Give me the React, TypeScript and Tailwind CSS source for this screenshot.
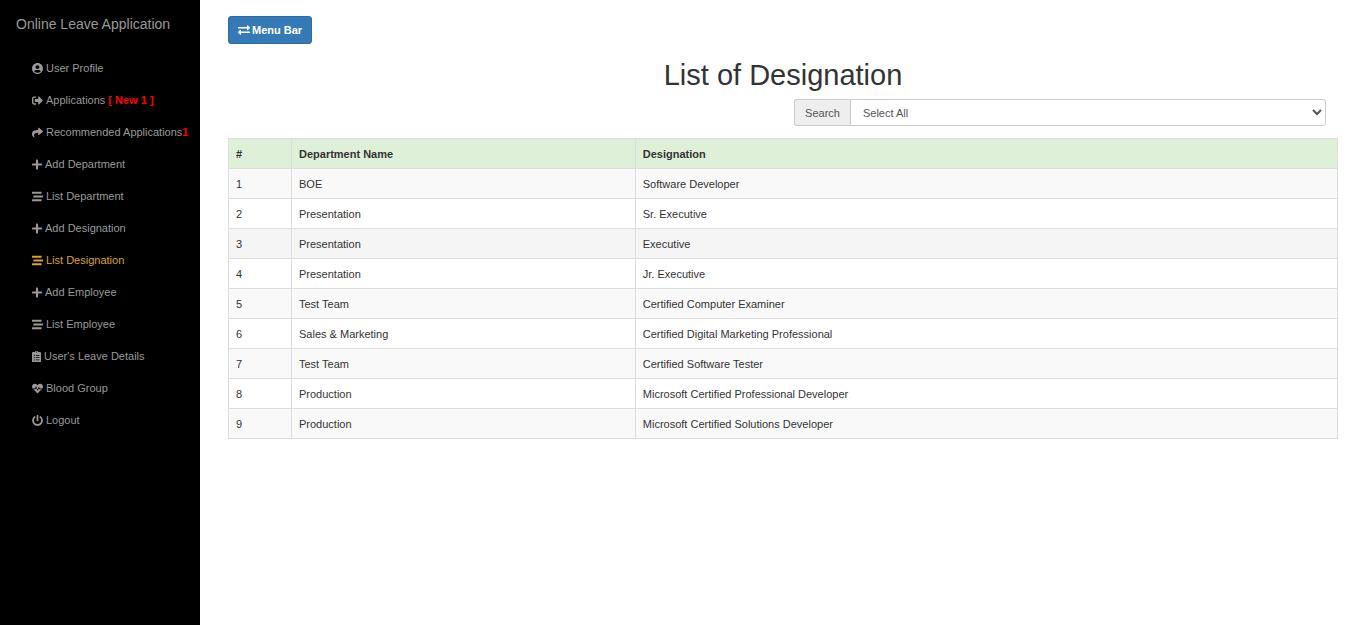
import { useState } from "react";
import type { IconType } from "react-icons";
import {
  FaClipboardList,
  FaExchangeAlt,
  FaHeartbeat,
  FaPlus,
  FaPowerOff,
  FaShare,
  FaSignOutAlt,
  FaStream,
  FaUserCircle,
} from "react-icons/fa";

type NavItem = {
  label: string;
  icon: IconType;
  iconWidth?: string;
  note?: string;
  spaced?: boolean;
};

const navItems: NavItem[] = [
  { label: "User Profile", icon: FaUserCircle },
  { label: "Applications", icon: FaSignOutAlt, note: "[ New 1 ]", spaced: true },
  { label: "Recommended Applications", icon: FaShare, note: "1" },
  { label: "Add Department", icon: FaPlus, iconWidth: "w-[10px]" },
  { label: "List Department", icon: FaStream },
  { label: "Add Designation", icon: FaPlus, iconWidth: "w-[10px]" },
  { label: "List Designation", icon: FaStream },
  { label: "Add Employee", icon: FaPlus, iconWidth: "w-[10px]" },
  { label: "List Employee", icon: FaStream },
  { label: "User's Leave Details", icon: FaClipboardList, iconWidth: "w-[9px]" },
  { label: "Blood Group", icon: FaHeartbeat },
  { label: "Logout", icon: FaPowerOff },
];

const rows = [
  ["BOE", "Software Developer"],
  ["Presentation", "Sr. Executive"],
  ["Presentation", "Executive"],
  ["Presentation", "Jr. Executive"],
  ["Test Team", "Certified Computer Examiner"],
  ["Sales & Marketing", "Certified Digital Marketing Professional"],
  ["Test Team", "Certified Software Tester"],
  ["Production", "Microsoft Certified Professional Developer"],
  ["Production", "Microsoft Certified Solutions Developer"],
];

const departments = Array.from(new Set(rows.map(([department]) => department)));

function Sidebar() {
  return (
    <aside className="w-[200px] shrink-0 bg-black text-[#999999]">
      <a href="#" className="block px-4 pt-3 text-[14px] leading-6 whitespace-nowrap">
        Online Leave Application
      </a>
      <nav className="mt-4 pl-8">
        <ul>
          {navItems.map(({ label, icon: Icon, iconWidth = "w-[11px]", note, spaced }) => {
            const active = label === "List Designation";
            return (
              <li key={label}>
                <a
                  href="#"
                  aria-current={active ? "page" : undefined}
                  className={`flex h-8 items-center whitespace-nowrap hover:text-white ${active ? "text-[#daa520]" : ""}`}
                >
                  <Icon
                    className={`mr-[3px] h-[11px] shrink-0 ${iconWidth}`}
                    preserveAspectRatio="xMidYMid slice"
                    aria-hidden
                  />
                  <span>{label}</span>
                  {note && (
                    <b className={`text-[#ff0000] ${spaced ? "ml-[3px]" : ""}`}>{note}</b>
                  )}
                </a>
              </li>
            );
          })}
        </ul>
      </nav>
    </aside>
  );
}

export default function App() {
  const [menuOpen, setMenuOpen] = useState(true);
  const [filter, setFilter] = useState("");
  const [highlighted, setHighlighted] = useState(2);

  return (
    <div className="flex min-h-screen bg-white font-['Liberation_Sans',Arial,sans-serif] text-[11px] leading-4 text-[#333333]">
      {menuOpen && <Sidebar />}
      <main className="min-w-0 flex-1 pt-4 pr-[15px] pb-4 pl-7">
        <button
          type="button"
          onClick={() => setMenuOpen(!menuOpen)}
          className="flex h-7 items-center gap-[2px] rounded-[3px] border border-[#2e6da4] bg-[#337ab7] px-[9px] font-bold text-white"
        >
          <FaExchangeAlt className="h-3 w-3" aria-hidden />
          Menu Bar
        </button>
        <h2 className="mt-3 text-center text-[29px] leading-[38px]">List of Designation</h2>
        <div className="mt-[5px] mr-3 ml-[51%] flex h-[27px]">
          <label
            htmlFor="department"
            className="flex items-center rounded-l-[3px] border border-r-0 border-[#cccccc] bg-[#eeeeee] px-[10px] text-[#555555]"
          >
            Search
          </label>
          <select
            id="department"
            value={filter}
            onChange={(event) => setFilter(event.target.value)}
            className="min-w-0 flex-1 rounded-r-[3px] border border-[#cccccc] bg-white pl-2 text-[#555555]"
          >
            <option value="">Select All</option>
            {departments.map((department) => (
              <option key={department}>{department}</option>
            ))}
          </select>
        </div>
        <table className="mt-3 w-full border-collapse text-left [&_td]:h-[30px] [&_td]:border [&_td]:border-[#dddddd] [&_td]:px-[7px] [&_th]:h-[30px] [&_th]:border [&_th]:border-[#dddddd] [&_th]:px-[7px]">
          <thead>
            <tr className="bg-[#dff0d8]">
              <th className="w-[63px]">#</th>
              <th className="w-[31%]">Department Name</th>
              <th>Designation</th>
            </tr>
          </thead>
          <tbody>
            {rows.map(([department, designation], index) =>
              filter && filter !== department ? null : (
                <tr
                  key={designation}
                  onMouseEnter={() => setHighlighted(index)}
                  className={index === highlighted ? "bg-[#f5f5f5]" : "odd:bg-[#f9f9f9]"}
                >
                  <td>{index + 1}</td>
                  <td>{department}</td>
                  <td>{designation}</td>
                </tr>
              ),
            )}
          </tbody>
        </table>
      </main>
    </div>
  );
}
